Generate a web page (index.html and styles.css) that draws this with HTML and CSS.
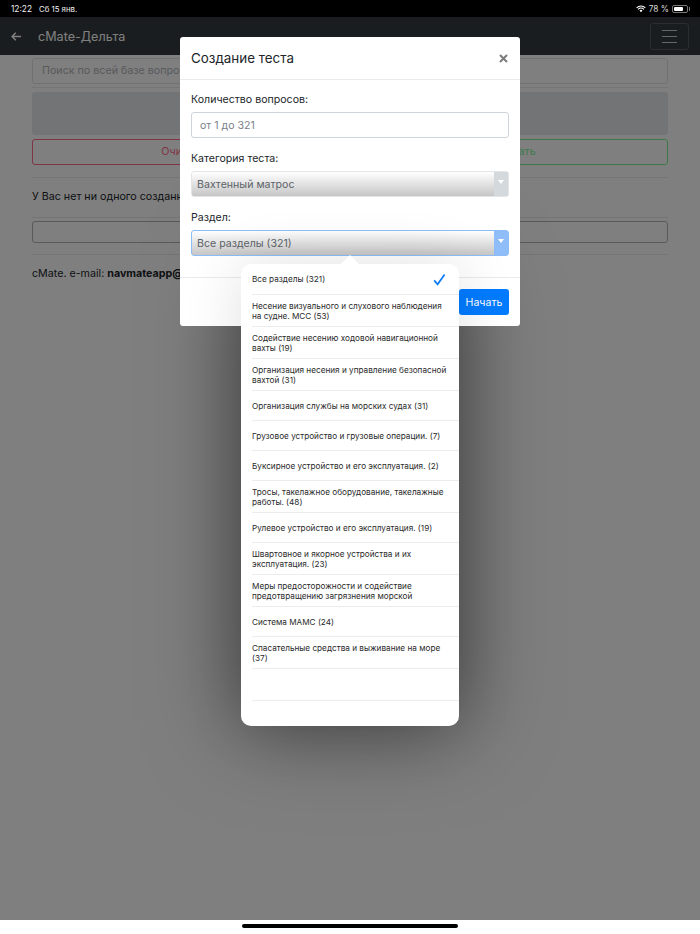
FILE: index.html
```html
<!DOCTYPE html>
<html lang="ru">
<head>
<meta charset="utf-8">
<title>cMate-Дельта</title>
<link rel="stylesheet" href="styles.css">
</head>
<body>
<div class="screen">
  <div class="app">
    <nav class="navbar">
      <svg class="back" width="10" height="9" viewBox="0 0 10 9"><path d="M4.8.8 1.1 4.5l3.7 3.7M1.1 4.5H10" fill="none" stroke="#fff" stroke-width="1.5"/></svg>
      <span class="brand">cMate-Дельта</span>
      <span class="toggler"><i></i><i></i><i></i></span>
    </nav>
    <main class="content">
      <div class="search">Поиск по всей базе вопросов</div>
      <hr class="rule top">
      <div class="graybox"></div>
      <div class="actions">
        <div class="btn-out red">Очистить</div>
        <div class="btn-out green">Создать</div>
      </div>
      <hr class="rule first">
      <p class="note">У Вас нет ни одного созданного теста</p>
      <hr class="rule second">
      <div class="btn-out dark"></div>
      <hr class="rule third">
      <p class="foot">cMate. e-mail: <b>navmateapp@gmail.com</b></p>
    </main>
  </div>
  <div class="home"><span></span></div>

  <div class="backdrop"></div>

  <header class="status">
    <span class="time">12:22</span><span class="date">Сб 15 янв.</span>
    <span class="status-right">
      <svg width="10" height="8" viewBox="0 0 11 9"><path d="M.6 3.2a7 7 0 0 1 9.8 0M2.2 4.9a4.7 4.7 0 0 1 6.6 0" fill="none" stroke="#fff" stroke-width="1.2"/><path d="M3.8 6.3a2.4 2.4 0 0 1 3.4 0L5.5 8.2Z" fill="#fff"/></svg>
      <span class="pct">78 %</span>
      <span class="battery"><i></i></span>
    </span>
  </header>

  <div class="popover-shade"></div>

  <section class="modal">
    <div class="modal-head">
      <h2>Создание теста</h2>
      <svg class="close" width="9" height="9" viewBox="0 0 9 9"><path d="M1 1l7 7M8 1 1 8" stroke="#7b7b7b" stroke-width="2"/></svg>
    </div>
    <div class="modal-body">
      <label>Количество вопросов:</label>
      <div class="field">от 1 до 321</div>
      <label>Категория теста:</label>
      <div class="select"><span>Вахтенный матрос</span><em><b></b></em></div>
      <label>Раздел:</label>
      <div class="select active"><span>Все разделы (321)</span><em><b></b></em></div>
    </div>
    <div class="modal-foot"><span class="start">Начать</span></div>
  </section>

  <section class="popover">
    <div class="row first-row">Все разделы (321)
      <svg class="check" width="13" height="13" viewBox="0 0 13 13"><path d="M1.2 7.4 4.6 11.3 11.6 1.4" fill="none" stroke="#0a7bf5" stroke-width="1.7"/></svg>
    </div>
    <div class="row two">Несение визуального и слухового наблюдения<br>на судне. МСС (53)</div>
    <div class="row two">Содействие несению ходовой навигационной<br>вахты (19)</div>
    <div class="row two">Организация несения и управление безопасной<br>вахтой (31)</div>
    <div class="row one">Организация службы на морских судах (31)</div>
    <div class="row one">Грузовое устройство и грузовые операции. (7)</div>
    <div class="row one">Буксирное устройство и его эксплуатация. (2)</div>
    <div class="row two">Тросы, такелажное оборудование, такелажные<br>работы. (48)</div>
    <div class="row one">Рулевое устройство и его эксплуатация. (19)</div>
    <div class="row two">Швартовное и якорное устройства и их<br>эксплуатация. (23)</div>
    <div class="row two">Меры предосторожности и содействие<br>предотвращению загрязнения морской</div>
    <div class="row one">Система МАМС (24)</div>
    <div class="row two">Спасательные средства и выживание на море<br>(37)</div>
    <div class="row two"></div>
    <div class="row last"></div>
  </section>
</div>
</body>
</html>
```
FILE: styles.css
```css
* { box-sizing: border-box; }
html, body { margin: 0; padding: 0; }
body { font-family: Inter, "Noto Sans", "Liberation Sans", sans-serif; color: #212529; }
.screen { position: relative; width: 700px; height: 934px; overflow: hidden; background: #fff; }
.app { height: 920px; padding-top: 17px; }
.navbar { display: flex; align-items: center; height: 38px; padding: 0 11px; background: #343a40; }
.back { flex: none; }
.brand { margin-left: 17px; font-size: 12.6px; color: #fff; }
.toggler { display: flex; flex-direction: column; justify-content: center; gap: 5px; width: 39px; height: 27px; margin-left: auto; padding: 0 11px; border: 1px solid #565c62; border-radius: 3px; }
.toggler i { display: block; height: 1px; background: #cbcdd0; }
.content { padding: 3px 32px 0; font-size: 10.7px; }
.search { height: 26px; padding: 0 9px; line-height: 24px; color: #b0b4b8; border: 1px solid #e0e2e4; border-radius: 3px; }
.graybox { height: 43px; margin-top: 4px; background: #e6e9ec; border-radius: 3px; }
.actions { display: flex; gap: 20px; margin-top: 4px; }
.btn-out { flex: 1; height: 26px; line-height: 24px; text-align: center; border: 1px solid; border-radius: 3px; }
.red { color: #ff6b88; border-color: #ff6b88; }
.green { color: #7cf296; border-color: #7cf296; }
.dark { border-color: #b4b4b4; height: 22px; }
.rule { height: 1px; margin: 0; border: 0; background: #eaeaea; }
.top { margin-top: 3px; }
.first { margin-top: 12px; }
.note { margin: 0; padding: 10px 0 11px; line-height: 18px; }
.second { margin-bottom: 3px; }
.third { margin-top: 11px; }
.foot { margin: 10px 0 0; line-height: 18px; }
.home { height: 14px; position: relative; }
.home span { position: absolute; left: 242px; top: 4px; width: 216px; height: 4px; border-radius: 2px; background: #000; }
.backdrop { position: absolute; left: 0; top: 0; width: 700px; height: 920px; background: rgba(0,0,0,.5); }
.status { position: absolute; left: 0; top: 0; display: flex; align-items: center; width: 700px; height: 17px; padding: 0 10px 0 11px; background: #000; color: #f2f2f2; font-size: 8.3px; }
.date { margin-left: 7px; font-size: 7.8px; }
.status-right { display: flex; align-items: center; gap: 3px; margin-left: auto; }
.pct { font-size: 8.3px; color: #d8d8d8; }
.battery { position: relative; display: block; width: 16px; height: 8px; margin-right: 2px; padding: 1px; border: 1px solid #777; border-radius: 2px; }
.battery i { display: block; width: 78%; height: 100%; background: #fff; border-radius: 1px; }
.battery::after { content: ""; position: absolute; right: -3px; top: 1px; width: 1px; height: 4px; background: #777; }
.popover-shade { position: absolute; left: 241px; top: 264px; width: 218px; height: 462px; border-radius: 10px; box-shadow: 0 0 90px rgba(0,0,0,.5); }
.modal { position: absolute; left: 180px; top: 37px; width: 340px; height: 289px; background: #fff; border-radius: 3px; }
.modal-head { display: flex; align-items: center; justify-content: space-between; height: 43px; padding: 0 12px 0 11px; border-bottom: 1px solid #e9ecef; }
.modal-head h2 { margin: 0; font-size: 13.4px; font-weight: 400; color: #212529; }
.modal-body { padding: 11px 11px 0; height: 197px; font-size: 10.6px; }
.modal-body label { display: block; height: 21px; line-height: 18px; color: #212529; }
.field { height: 26px; margin-bottom: 12px; padding: 1px 8px 0; line-height: 24px; color: #7b8189; border: 1px solid #ced4da; border-radius: 3px; }
.select { position: relative; display: flex; height: 26px; margin-bottom: 12px; line-height: 26px; color: #5c6268; border: 1px solid #e3e6e9; border-radius: 3px; background: linear-gradient(#fff, #c6c6c6); }
.select span { flex: 1; padding-left: 5px; }
.select em { display: flex; justify-content: center; width: 14px; padding-top: 8px; background: #d4d9de; }
.select em b { width: 0; height: 0; border: 3px solid transparent; border-top: 4px solid #fff; }
.select.active { border-color: #8dbdf8; }
.select.active em { background: #8fbdf7; }
.modal-foot { display: flex; justify-content: flex-end; height: 49px; padding: 11px 11px 0; border-top: 1px solid #e9ecef; }
.start { width: 50px; height: 26px; line-height: 28px; text-align: center; color: #fff; font-size: 10.6px; background: #007bff; border-radius: 3px; }
.popover { position: absolute; left: 241px; top: 264px; width: 218px; height: 462px; padding-left: 11px; background: #fff; border-radius: 10px; box-shadow: 0 0 60px rgba(0,0,0,.12); font-size: 8.2px; color: #2a2a2a; }
.popover::before { content: ""; position: absolute; left: 100px; top: -9px; width: 18px; height: 9px; background: #fff; clip-path: polygon(0 100%, 50% 0, 100% 100%); }
.row { position: relative; display: flex; align-items: center; padding-top: 1px; border-bottom: 1px solid #ececec; line-height: 10.5px; }
.row.first-row { height: 31px; }
.row.one { height: 30px; }
.row.two { height: 32px; }
.row.last { height: 25px; border-bottom: 0; }
.check { position: absolute; right: 13px; top: 9px; }
```
